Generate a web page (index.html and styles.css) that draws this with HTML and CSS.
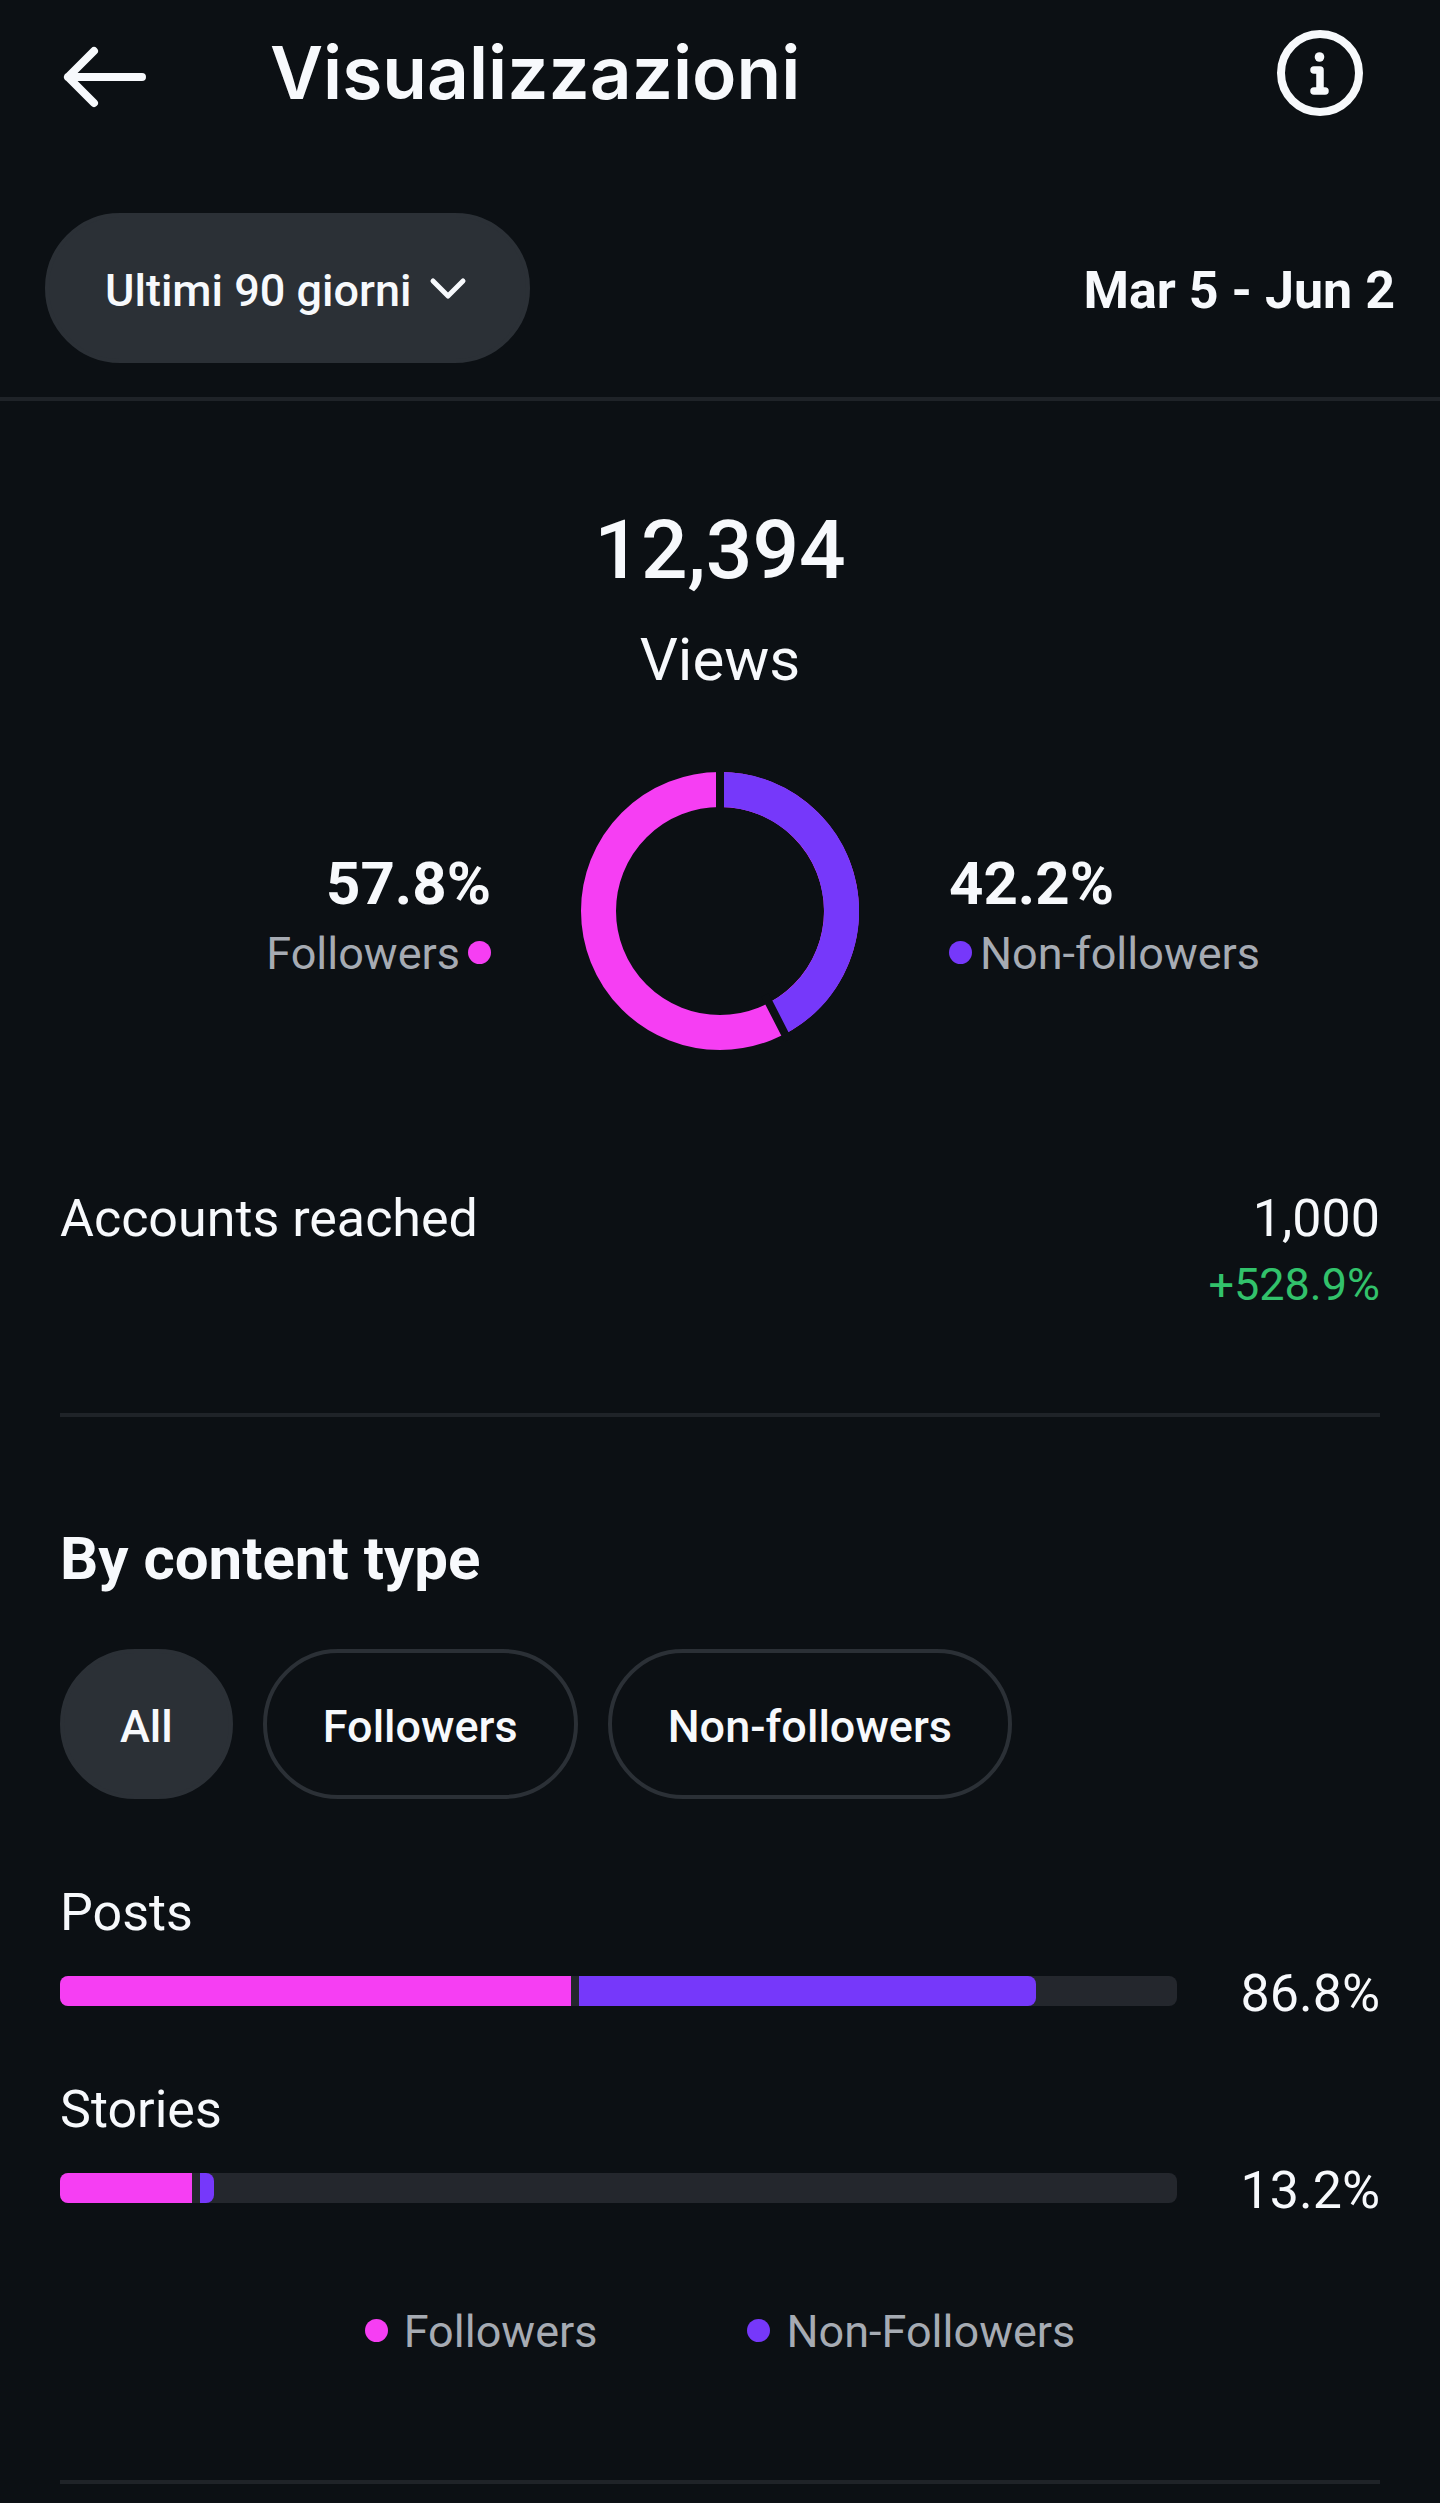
FILE: index.html
```html
<!DOCTYPE html>
<html lang="it">
<head>
<meta charset="utf-8">
<meta name="viewport" content="width=device-width, initial-scale=1">
<title>Visualizzazioni</title>
<link rel="stylesheet" href="styles.css">
</head>
<body>
<header class="header">
  <button class="icon-button" type="button" aria-label="Indietro">
    <svg width="90" height="90" viewBox="0 0 90 90" fill="none" stroke="currentColor" stroke-width="8" stroke-linecap="round" stroke-linejoin="round"><path d="M82 49H8M34 23L8 49l26 26"/></svg>
  </button>
  <h1 class="title">Visualizzazioni</h1>
  <button class="icon-button" type="button" aria-label="Informazioni">
    <svg width="90" height="90" viewBox="0 0 90 90" fill="none" stroke="currentColor" stroke-linecap="round" stroke-linejoin="round"><circle cx="45" cy="45" r="39" stroke-width="8"/><path d="M39 42h6v21M39 63h11" stroke-width="7.500"/><circle cx="44.500" cy="29" r="4.800" fill="currentColor" stroke="none"/></svg>
  </button>
</header>

<div class="toolbar">
  <div class="period">
    <select class="pill pill-filled period-select" aria-label="Periodo">
      <option>Ultimi 90 giorni</option>
    </select>
    <svg class="period-arrow" width="40" height="28" viewBox="0 0 40 28" fill="none" stroke="currentColor" stroke-width="5" stroke-linecap="round" stroke-linejoin="round"><path d="M5 6l15 15L35 6"/></svg>
  </div>
  <p class="dates">Mar 5 - Jun 2</p>
</div>

<main class="content">
  <section class="summary">
    <p class="total">12,394</p>
    <p class="total-label">Views</p>
    <div class="split">
      <div class="share share-left">
        <p class="share-value">57.8%</p>
        <p class="share-label">Followers<span class="dot dot-pink"></span></p>
      </div>
      <svg class="donut" width="278" height="278" viewBox="0 0 278 278" fill="none" stroke-width="35" role="img" aria-label="Followers 57.8%, Non-followers 42.2%">
        <circle class="arc-pink" cx="139" cy="139" r="121.500"/>
        <path class="arc-purple" d="M139 17.500A121.500 121.500 0 0 1 196.200 246.200"/>
        <path class="arc-gap" d="M139 0V40M184 223L207 268"/>
      </svg>
      <div class="share">
        <p class="share-value">42.2%</p>
        <p class="share-label"><span class="dot dot-purple"></span>Non-followers</p>
      </div>
    </div>
    <div class="reach">
      <p class="metric">Accounts reached</p>
      <div class="reach-values">
        <p class="metric">1,000</p>
        <p class="change">+528.9%</p>
      </div>
    </div>
  </section>

  <section class="types">
    <h2 class="heading">By content type</h2>
    <div class="filters">
      <button class="pill pill-filled" type="button" aria-pressed="true">All</button>
      <button class="pill" type="button" aria-pressed="false">Followers</button>
      <button class="pill" type="button" aria-pressed="false">Non-followers</button>
    </div>
    <div class="bars">
      <div class="bar-item">
        <p class="metric">Posts</p>
        <div class="bar-row">
          <div class="track"><span class="fill fill-pink" style="width:45.8%"></span><span class="fill fill-purple" style="width:40.9%"></span></div>
          <p class="metric">86.8%</p>
        </div>
      </div>
      <div class="bar-item">
        <p class="metric">Stories</p>
        <div class="bar-row">
          <div class="track"><span class="fill fill-pink" style="width:11.8%"></span><span class="fill fill-purple" style="width:1.3%"></span></div>
          <p class="metric">13.2%</p>
        </div>
      </div>
    </div>
    <div class="legend">
      <span class="legend-item"><span class="dot dot-pink"></span>Followers</span>
      <span class="legend-item"><span class="dot dot-purple"></span>Non-Followers</span>
    </div>
  </section>
</main>
</body>
</html>
```
FILE: styles.css
```css
:root {
  --bg: #0c1014;
  --text: #f7f9fc;
  --muted: #a6abb3;
  --line: #1f2328;
  --pill: #2b3036;
  --track: #24272d;
  --pink: #f63ef3;
  --purple: #7638fa;
  --green: #32c26b;
}

* {
  box-sizing: border-box;
}

body {
  margin: 0;
  background: var(--bg);
  color: var(--text);
  font-family: Roboto, "Liberation Sans", sans-serif;
}

h1, h2, p {
  margin: 0;
}

svg {
  display: block;
}

.header {
  display: flex;
  align-items: center;
  padding: 0 75px 0 60px;
}

.icon-button {
  display: flex;
  align-items: center;
  height: 146px;
  padding: 0;
  border: 0;
  background: none;
  color: inherit;
}

.title {
  flex: 1;
  padding-left: 120px;
  font: 600 73px/100px Inter, "Noto Sans", sans-serif;
}

.toolbar {
  display: flex;
  align-items: center;
  justify-content: space-between;
  padding: 67px 45px 34px;
  border-bottom: 4px solid var(--line);
}

.pill {
  height: 150px;
  padding: 6px 56px 0;
  border: 4px solid var(--pill);
  border-radius: 75px;
  background: transparent;
  color: inherit;
  font: 500 45px/60px Roboto, "Liberation Sans", sans-serif;
}

.pill-filled {
  background: var(--pill);
}

.period {
  position: relative;
}

.period-select {
  appearance: none;
  padding-right: 114px;
}

.period-arrow {
  position: absolute;
  top: 62px;
  right: 62px;
  pointer-events: none;
}

.dates {
  padding-top: 6px;
  font-size: 52px;
  font-weight: 700;
  line-height: 64px;
}

.content {
  padding: 0 60px 19px;
}

.summary {
  padding: 99px 0 94px;
  border-bottom: 4px solid var(--line);
}

.total {
  font-size: 82px;
  font-weight: 500;
  line-height: 100px;
  text-align: center;
}

.total-label {
  margin-top: 20px;
  font-size: 60px;
  line-height: 80px;
  text-align: center;
}

.split {
  display: grid;
  grid-template-columns: 1fr auto 1fr;
  align-items: center;
  gap: 90px;
  margin: 72px 0 137px;
}

.arc-pink {
  stroke: var(--pink);
}

.arc-purple {
  stroke: var(--purple);
}

.arc-gap {
  stroke: var(--bg);
  stroke-width: 8px;
}

.share {
  padding-top: 2px;
}

.share-value {
  font-size: 60px;
  font-weight: 700;
  line-height: 84px;
}

.share-label {
  display: flex;
  align-items: center;
  gap: 8px;
  color: var(--muted);
  font-size: 45px;
  line-height: 56px;
}

.share-left {
  text-align: right;
}

.share-left .share-label {
  justify-content: flex-end;
}

.dot {
  width: 23px;
  height: 23px;
  margin-bottom: 4px;
  border-radius: 50%;
}

.dot-pink {
  background: var(--pink);
}

.dot-purple {
  background: var(--purple);
}

.reach {
  display: flex;
  justify-content: space-between;
}

.reach-values {
  text-align: right;
}

.metric {
  font-size: 52px;
  line-height: 64px;
}

.change {
  color: var(--green);
  font-size: 45px;
  line-height: 68px;
}

.types {
  padding: 102px 0 118px;
  border-bottom: 4px solid var(--line);
}

.heading {
  font-size: 60px;
  font-weight: 700;
  line-height: 80px;
}

.filters {
  display: flex;
  gap: 30px;
  margin: 50px 0 82px;
}

.bars {
  display: grid;
  gap: 52px;
}

.bar-item {
  display: grid;
  gap: 17px;
}

.bar-row {
  display: flex;
  align-items: center;
  gap: 64px;
}

.track {
  display: flex;
  flex: 1;
  gap: 8px;
  height: 30px;
  margin-bottom: 6px;
  overflow: hidden;
  border-radius: 8px;
  background: var(--track);
}

.fill-pink {
  background: var(--pink);
}

.fill-purple {
  border-radius: 0 8px 8px 0;
  background: var(--purple);
}

.legend {
  display: flex;
  justify-content: center;
  gap: 150px;
  margin-top: 79px;
}

.legend-item {
  display: flex;
  align-items: center;
  gap: 16px;
  color: var(--muted);
  font-size: 45px;
  line-height: 60px;
}
```
